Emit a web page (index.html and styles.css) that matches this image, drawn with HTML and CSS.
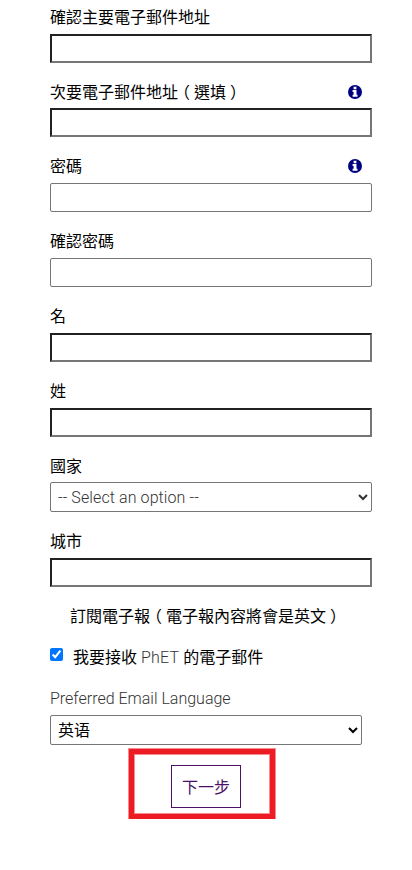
FILE: index.html
```html
<!DOCTYPE html>
<html lang="zh-TW">
<head>
    <meta charset="UTF-8">
    <meta name="viewport" content="width=device-width, initial-scale=1.0">
    <title>PhET</title>
    <link rel="stylesheet" href="styles.css">
</head>
<body>
    <form class="register-form">
        <div class="field">
            <label for="confirmEmail">確認主要電子郵件地址</label>
            <input type="email" id="confirmEmail" class="text-input">
        </div>
        <div class="field tight">
            <div class="label-row">
                <label for="secondaryEmail">次要電子郵件地址<span class="paren">（</span>選填<span class="paren">）</span></label>
                <svg class="info-icon" viewBox="0 0 14 14"><circle cx="7" cy="7" r="7"/><path d="M5.6 1.8h2.8v2.4H5.6zM4.6 5.1h3.9v4.6h1v2H4.6v-2h1V7.1h-1z"/></svg>
            </div>
            <input type="email" id="secondaryEmail" class="text-input">
        </div>
        <div class="field">
            <div class="label-row">
                <label for="password">密碼</label>
                <svg class="info-icon" viewBox="0 0 14 14"><circle cx="7" cy="7" r="7"/><path d="M5.6 1.8h2.8v2.4H5.6zM4.6 5.1h3.9v4.6h1v2H4.6v-2h1V7.1h-1z"/></svg>
            </div>
            <input type="password" id="password" class="text-input thin">
        </div>
        <div class="field">
            <label for="confirmPassword">確認密碼</label>
            <input type="password" id="confirmPassword" class="text-input thin">
        </div>
        <div class="field">
            <label for="firstName">名</label>
            <input type="text" id="firstName" class="text-input">
        </div>
        <div class="field">
            <label for="lastName">姓</label>
            <input type="text" id="lastName" class="text-input">
        </div>
        <div class="field tight">
            <label for="country">國家</label>
            <select id="country" class="select latin">
                <option>-- Select an option --</option>
            </select>
        </div>
        <div class="field">
            <label for="city">城市</label>
            <input type="text" id="city" class="text-input">
        </div>

        <p class="newsletter">訂閱電子報<span class="paren">（</span>電子報內容將會是英文<span class="paren">）</span></p>
        <div class="check-row">
            <input type="checkbox" id="subscribe" class="checkbox" checked>
            <label for="subscribe">我要接收 <span class="latin">PhET</span> 的電子郵件</label>
        </div>
        <div class="language">
            <label for="language" class="latin">Preferred Email Language</label>
            <select id="language" class="select">
                <option>英语</option>
            </select>
        </div>
        <div class="highlight">
            <button type="button" class="next-button">下一步</button>
        </div>
    </form>
</body>
</html>
```

FILE: styles.css
```css
* { box-sizing: border-box; }
body { margin: 0; background-color: #fff; color: #000; font-family: Roboto, "Noto Sans CJK TC", sans-serif; font-size: 16px; font-weight: 400; line-height: 24px; }
.register-form { width: 322px; margin-left: 50px; padding-top: 6px; }

.field { display: flex; flex-direction: column; gap: 4px; margin-bottom: 18px; }
.field label { height: 24px; }
.field.tight { gap: 3px; }
.label-row { display: flex; justify-content: space-between; align-items: center; padding-right: 10px; }
/* half-width brackets, centred in a full-width cell */
.paren { margin: 0 4px; font-feature-settings: "halt"; }

.info-icon { width: 14px; height: 14px; margin-bottom: 2px; fill: #000080; }
.info-icon path { fill: #fff; }

.text-input { width: 100%; height: 29px; margin: 0; background-color: #fff; border: 2px solid; border-color: #212121 #767676 #767676 #212121; border-radius: 0; }
.text-input.thin { border: 1px solid #767676; border-radius: 2px; }
.select { width: 100%; height: 30px; margin: 0; padding: 0 3px; background-color: #fff; border: 1px solid #767676; border-radius: 2px; color: #000; font: inherit; }
.latin { font-weight: 300; color: #333; }
.select.latin { letter-spacing: 0.1px; }

.newsletter { margin: 0 0 17px 20px; }
.check-row { display: flex; align-items: flex-start; gap: 10px; margin-bottom: 17px; }
.check-row .latin { letter-spacing: 0.2px; }
.checkbox { width: 13px; height: 13px; margin: 2px 0 0; }
.language { display: flex; flex-direction: column; gap: 4px; width: 312px; }

/* red frame round the next button */
.highlight { display: flex; justify-content: center; align-items: flex-start; width: 146px; height: 70px; margin: 4px 0 0 79px; padding: 11px 0 0 8px; border: 5px solid #ed1c24; box-shadow: 0 0 0 1px #f58c90, inset 0 0 0 1px #f58c90; }
.next-button { width: 70px; height: 43px; padding: 2px 0 0; background-color: #fff; border: 1px solid #4b1168; border-radius: 0; color: #4b1168; font: inherit; }
```
